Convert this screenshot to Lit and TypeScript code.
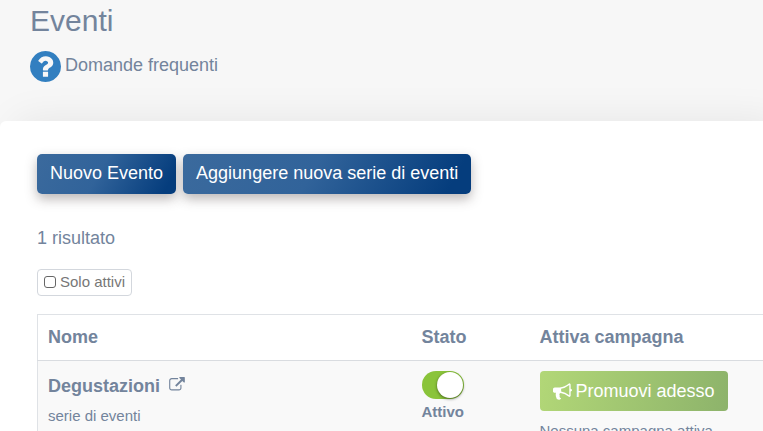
import { LitElement, html, css } from "lit";
import { customElement, state } from "lit/decorators.js";

const questionIcon = html`<svg class="icon-question" viewBox="128 128 1536 1536" aria-hidden="true"><path d="M1024 1376v-192q0-14-9-23t-23-9h-192q-14 0-23 9t-9 23v192q0 14 9 23t23 9h192q14 0 23-9t9-23zm256-672q0-88-55.5-163t-138.5-116-170-41q-243 0-371 213-15 24 8 42l132 100q7 6 19 6 16 0 25-12 53-68 86-92 34-24 86-24 48 0 85.5 26t37.5 59q0 38-20 61t-68 45q-63 28-115.5 86.5t-52.5 125.5v36q0 14 9 23t23 9h192q14 0 23-9t9-23q0-19 21.5-49.5t54.5-49.5q32-18 49-28.5t46-35 44.5-48 28-60.5 12.5-81zm384 192q0 209-103 385.5t-279.5 279.5-385.5 103-385.5-103-279.5-279.5-103-385.5 103-385.5 279.5-279.5 385.5-103 385.5 103 279.5 279.5 103 385.5z"/></svg>`;

const bullhornIcon = html`<svg class="icon-bullhorn" viewBox="0 0 1792 1792" aria-hidden="true"><path d="M1664 640q53 0 90.5 37.5t37.5 90.5-37.5 90.5-90.5 37.5v384q0 52-38 90t-90 38q-417-347-812-380-58 19-91 66t-31 100.5 40 92.5q-20 33-23 65.5t6 58 33.5 55 48 50 61.5 50.5q-29 58-111.5 83t-168.5 11.5-132-55.5q-7-23-29.5-87.5t-32-94.5-23-89-15-101 3.5-98.5 22-110.5h-122q-66 0-113-47t-47-113v-192q0-66 47-113t113-47h480q435 0 896-384 52 0 90 38t38 90v384zm-128 604v-954q-394 302-768 343v270q377 42 768 341z"/></svg>`;

const externalIcon = html`<svg class="icon-external" viewBox="0 0 1792 1600" aria-hidden="true"><path d="M1408 928v320q0 119-84.5 203.5t-203.5 84.5h-832q-119 0-203.5-84.5t-84.5-203.5v-832q0-119 84.5-203.5t203.5-84.5h704q14 0 23 9t9 23v64q0 14-9 23t-23 9h-704q-66 0-113 47t-47 113v832q0 66 47 113t113 47h832q66 0 113-47t47-113v-320q0-14 9-23t23-9h64q14 0 23 9t9 23zm384-864v512q0 26-19 45t-45 19-45-19l-176-176-652 652q-10 10-23 10t-23-10l-114-114q-10-10-10-23t10-23l652-652-176-176q-19-19-19-45t19-45 45-19h512q26 0 45 19t19 45z"/></svg>`;

@customElement("app-root")
export class AppRoot extends LitElement {
  @state() private onlyActive = false;
  @state() private active = true;

  static styles = css`
    :host {
      display: block;
      min-height: 100vh;
      background: #f7f7f7;
      color: #73849c;
      font: 18px/24px "Liberation Sans", Arial, sans-serif;
    }
    * { box-sizing: border-box; }
    svg { display: block; fill: currentColor; flex: none; }
    button { font: inherit; border: 0; cursor: pointer; }
    a { color: inherit; text-decoration: none; }
    input { margin: 0; appearance: none; flex: none; }

    .header { padding: 3px 30px 39px; }
    .title { margin: 0 0 12px; font-size: 30px; line-height: 36px; font-weight: 400; }
    .faq { display: inline-flex; align-items: center; gap: 4px; vertical-align: top; }
    .faq-label { padding-bottom: 4px; }
    .icon-question { width: 31px; height: 31px; color: #327fc0; }

    .card {
      background: #fff;
      border-radius: 6px 0 0 0;
      padding: 33px 0 24px 37px;
      box-shadow: 16px 0 40px rgba(0, 0, 0, 0.08);
    }
    .actions { display: flex; flex-wrap: wrap; gap: 7px; }
    .primary {
      height: 40px;
      padding: 0 13px 2px;
      border-radius: 5px;
      color: #fff;
      background: linear-gradient(120deg, #3b6a9d 0%, #31639a 45%, #053d7d 92%);
      box-shadow: 0 5px 12px rgba(60, 50, 50, 0.35);
    }
    .count { margin: 32px 0 19px; }

    .filter {
      display: inline-flex;
      align-items: center;
      gap: 4px;
      height: 27px;
      padding: 0 6px 2px;
      border: 1px solid #d3d7dd;
      border-radius: 4px;
      vertical-align: top;
      font-size: 15px;
      line-height: 20px;
      color: #777;
    }
    .tick { width: 12px; height: 12px; border: 1px solid #666; border-radius: 3px; }
    .tick:checked { background: #327fc0; }

    .events {
      width: 100%;
      margin-top: 18px;
      table-layout: fixed;
      border-collapse: collapse;
      border: 1px solid #dfe2e6;
      border-right: 0;
    }
    .col-name { width: 374px; }
    .col-state { width: 118px; }
    th { padding: 10px 10px 11px; text-align: left; font-weight: 700; }
    td {
      padding: 10px;
      vertical-align: top;
      background: #f9f9f9;
      border-top: 1px solid #d9dce0;
    }
    .event { display: flex; align-items: center; gap: 9px; margin: 3px 0 8px; font-weight: 700; }
    .icon-external { width: 16px; height: 14px; margin-bottom: 4px; }
    .note { font-size: 15px; line-height: 20px; }
    .status { display: grid; justify-items: start; gap: 3px; font-size: 15px; line-height: 20px; font-weight: 700; }
    .switch {
      display: flex;
      width: 42px;
      height: 28px;
      padding: 1px;
      border-radius: 14px;
      background: #bbb;
      cursor: pointer;
    }
    .switch:checked { justify-content: flex-end; background: #8ac43a; }
    .switch::before {
      content: "";
      width: 26px;
      height: 26px;
      border-radius: 50%;
      background: #fff;
      box-shadow: 0 1px 3px rgba(0, 0, 0, 0.5);
    }
    .promote {
      display: flex;
      align-items: center;
      gap: 4px;
      height: 40px;
      margin-bottom: 10px;
      padding: 0 13px;
      border-radius: 4px;
      color: #fff;
      background: linear-gradient(100deg, #b2d777, #8db36b);
    }
    .icon-bullhorn { width: 19px; height: 19px; }
  `;

  render() {
    return html`
      <header class="header">
        <h1 class="title">Eventi</h1>
        <a class="faq" href="#faq">${questionIcon}<span class="faq-label">Domande frequenti</span></a>
      </header>
      <main class="card">
        <div class="actions">
          <button class="primary" type="button">Nuovo Evento</button>
          <button class="primary" type="button">Aggiungere nuova serie di eventi</button>
        </div>
        <p class="count">1 risultato</p>
        <label class="filter">
          <input class="tick" type="checkbox" .checked=${this.onlyActive}
            @change=${(e: Event) => (this.onlyActive = (e.target as HTMLInputElement).checked)} />
          Solo attivi
        </label>
        <table class="events">
          <colgroup><col class="col-name" /><col class="col-state" /><col /></colgroup>
          <thead>
            <tr><th scope="col">Nome</th><th scope="col">Stato</th><th scope="col">Attiva campagna</th></tr>
          </thead>
          <tbody>
            <tr>
              <td>
                <a class="event" href="#degustazioni">Degustazioni ${externalIcon}</a>
                <div class="note">serie di eventi</div>
              </td>
              <td>
                <label class="status">
                  <input class="switch" type="checkbox" role="switch" .checked=${this.active}
                    @change=${(e: Event) => (this.active = (e.target as HTMLInputElement).checked)} />
                  Attivo
                </label>
              </td>
              <td>
                <button class="promote" type="button">${bullhornIcon}Promuovi adesso</button>
                <div class="note">Nessuna campagna attiva</div>
              </td>
            </tr>
          </tbody>
        </table>
      </main>
    `;
  }
}
